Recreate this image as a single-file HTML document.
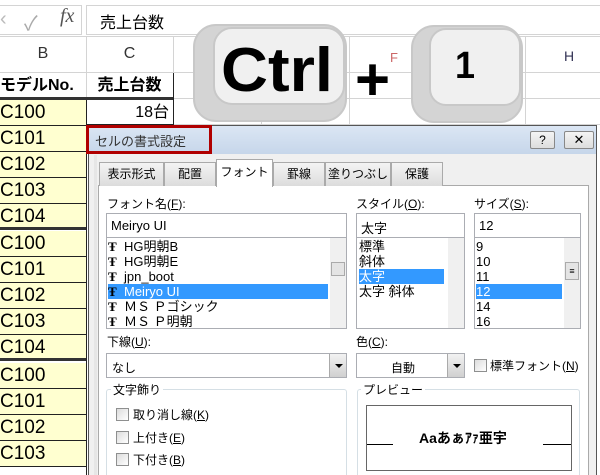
<!DOCTYPE html>
<html><head><meta charset="utf-8"><style>
*{box-sizing:border-box;margin:0;padding:0}
html,body{width:600px;height:475px;overflow:hidden}
body{background:#fff;position:relative;font-family:"Liberation Sans","Noto Sans CJK JP",sans-serif;color:#000}
.a{position:absolute}
.hl{position:absolute;height:1px;background:#d4d4d4}
.vl{position:absolute;width:1px;background:#d4d4d4}
.cell{position:absolute;left:0;width:86px;height:26px;background:#ffffd0;border-bottom:1px solid #222;font-size:19px;line-height:26px;padding-left:0}
.t{font-size:12px;position:absolute;white-space:nowrap}
.box{position:absolute;background:#fff;border:1px solid #abadb3;overflow:hidden}
.li{position:absolute;font-size:13px;height:15px;line-height:15px;white-space:nowrap}
.sel{background:#3399ff;color:#fff}
.sb{position:absolute;top:0;bottom:0;right:0;width:16px;background:#f0f0f0}
.tab{position:absolute;top:162px;height:24px;border:1px solid #aaa;border-bottom:none;background:linear-gradient(#f4f4f4,#dcdcdc);font-size:12px;text-align:center;line-height:22px}
.cb{position:absolute;width:13px;height:13px;border:1px solid #8e8f8f;background:linear-gradient(135deg,#dcdcdc,#fff)}
.dd{position:absolute;right:0;top:0;bottom:0;width:17px;background:linear-gradient(#f2f2f2,#d0d0d0);border-left:1px solid #aaa}
.dd:after{content:"";position:absolute;left:5px;top:10px;border:4px solid transparent;border-top:4px solid #000}
.tt{font-family:"Liberation Serif",serif;font-weight:bold;font-size:13px;display:inline-block;width:16px}
</style></head><body>
<div class="a" style="left:0;top:0;width:600px;height:37px;background:#fff;border-bottom:1px solid #d4d4d4"></div>
<div class="a" style="left:0;top:5px;width:82px;height:30px;border:1px solid #d4d4d4;border-left:none"></div>
<div class="a" style="left:0;top:8px;font-size:20px;color:#bbb">‹</div>
<div class="a" style="left:24px;top:7px;font-size:20px;color:#aaa">✓</div>
<div class="a" style="left:60px;top:5px;font-size:20px;color:#555;font-family:'Liberation Serif',serif;font-style:italic">fx</div>
<div class="a" style="left:86px;top:5px;width:520px;height:30px;border:1px solid #d4d4d4"></div>
<div class="a" style="left:100px;top:9px;font-size:16px">売上台数</div>
<div class="a" style="left:0;top:45px;width:86px;text-align:center;font-size:16px;color:#333">B</div>
<div class="a" style="left:86px;top:45px;width:87px;text-align:center;font-size:16px;color:#333">C</div>
<div class="a" style="left:390px;top:50px;font-size:13px;color:#c66">F</div>
<div class="a" style="left:564px;top:48px;font-size:14px;color:#335">H</div>
<div class="vl" style="left:86px;top:37px;height:440px"></div>
<div class="vl" style="left:173px;top:37px;height:90px"></div>
<div class="vl" style="left:261px;top:37px;height:90px"></div>
<div class="vl" style="left:349px;top:37px;height:90px"></div>
<div class="vl" style="left:525px;top:37px;height:90px"></div>
<div class="hl" style="left:0;top:72px;width:600px"></div>
<div class="hl" style="left:173px;top:98px;width:427px"></div>
<div class="hl" style="left:173px;top:124px;width:427px"></div>
<div class="a" style="left:0;top:73px;width:86px;height:26px;font-size:16px;font-weight:bold;line-height:26px">モデルNo.</div>
<div class="a" style="left:86px;top:73px;width:87px;height:26px;font-size:16px;font-weight:bold;line-height:26px;text-align:center">売上台数</div>
<div class="a" style="left:0;top:97px;width:173px;height:3px;background:#333"></div>
<div class="a" style="left:173px;top:73px;width:1px;height:52px;background:#222"></div>
<div class="a" style="left:86px;top:100px;width:87px;height:25px;font-size:16px;line-height:25px;text-align:right;padding-right:4px;border-bottom:1px solid #222">18台</div>
<div class="cell" style="top:100px">C100</div>
<div class="cell" style="top:126px">C101</div>
<div class="cell" style="top:152px">C102</div>
<div class="cell" style="top:178px">C103</div>
<div class="cell" style="top:204px;height:26px;border-bottom:3px solid #333">C104</div>
<div class="cell" style="top:231px">C100</div>
<div class="cell" style="top:257px">C101</div>
<div class="cell" style="top:283px">C102</div>
<div class="cell" style="top:309px">C103</div>
<div class="cell" style="top:335px;border-bottom:3px solid #333">C104</div>
<div class="cell" style="top:363px">C100</div>
<div class="cell" style="top:389px">C101</div>
<div class="cell" style="top:415px">C102</div>
<div class="cell" style="top:441px">C103</div>
<div class="a" style="left:86px;top:100px;width:1px;height:380px;background:#222"></div>
<svg class="a" style="left:190px;top:20px" width="350" height="106">
<rect x="4" y="5" width="152" height="96" rx="22" fill="#d4d4d4" stroke="#c8c8c8" stroke-width="2"/>
<rect x="24" y="8" width="130" height="76" rx="18" fill="#f0f0f0" stroke="#c8c8c8" stroke-width="2"/>
<rect x="222" y="6" width="110" height="96" rx="22" fill="#d4d4d4" stroke="#c8c8c8" stroke-width="2"/>
<rect x="240" y="9" width="90" height="76" rx="16" fill="#f0f0f0" stroke="#c8c8c8" stroke-width="2"/>
<text x="31" y="71" font-family="Liberation Sans" font-weight="bold" font-size="62" textLength="112" lengthAdjust="spacingAndGlyphs">Ctrl</text>
<text x="165" y="80" font-family="Liberation Sans" font-weight="bold" font-size="60">+</text>
<text x="265" y="58" font-family="Liberation Sans" font-size="38" font-weight="bold" textLength="20" lengthAdjust="spacingAndGlyphs">1</text>
</svg>
<div class="a" style="left:88px;top:125px;width:509px;height:360px;background:#f0f0f0;border:1px solid #555"></div>
<div class="a" style="left:89px;top:126px;width:507px;height:28px;background:linear-gradient(#dbe6f4,#c6d6ea)"></div>
<div class="a" style="left:86px;top:125px;width:126px;height:29px;border:3px solid #b00000"></div>
<div class="t" style="left:95px;top:131px;font-size:13px;color:#333">セルの書式設定</div>
<div class="a" style="left:530px;top:131px;width:25px;height:18px;border:1px solid #888;border-radius:2px;background:linear-gradient(#f4f4f4,#ddd);font-size:12px;text-align:center;line-height:16px">?</div>
<div class="a" style="left:564px;top:131px;width:30px;height:18px;border:1px solid #888;border-radius:2px;background:linear-gradient(#f4f4f4,#ddd);font-size:13px;text-align:center;line-height:16px">✕</div>
<div class="a" style="left:94px;top:155px;width:3px;height:320px;background:#e6e6e6"></div>
<div class="a" style="left:98px;top:185px;width:491px;height:295px;background:#fff;border:1px solid #aaa"></div>
<div class="tab" style="left:99px;width:65px">表示形式</div>
<div class="tab" style="left:164px;width:52px">配置</div>
<div class="tab" style="left:216px;top:159px;height:28px;width:57px;background:#fff;line-height:24px">フォント</div>
<div class="tab" style="left:273px;width:52px">罫線</div>
<div class="tab" style="left:325px;width:66px">塗りつぶし</div>
<div class="tab" style="left:391px;width:52px">保護</div>
<div class="t" style="left:107px;top:195px">フォント名(<u>F</u>):</div>
<div class="t" style="left:356px;top:195px">スタイル(<u>O</u>):</div>
<div class="t" style="left:474px;top:195px">サイズ(<u>S</u>):</div>
<div class="box" style="left:106px;top:213px;width:241px;height:25px"><div class="t" style="left:4px;top:4px;font-size:13px">Meiryo UI</div></div>
<div class="box" style="left:356px;top:213px;width:109px;height:25px"><div class="t" style="left:4px;top:4px;font-size:13px">太字</div></div>
<div class="box" style="left:474px;top:213px;width:107px;height:25px"><div class="t" style="left:4px;top:4px;font-size:13px">12</div></div>
<div class="box" style="left:106px;top:237px;width:241px;height:92px">
<div class="sb"><div class="a" style="left:1px;top:24px;width:14px;height:14px;border:1px solid #aaa;background:#e4e4e4"></div></div>
<div class="li" style="left:1px;top:1px;width:220px"><span class="tt">Ŧ</span>HG明朝B</div>
<div class="li" style="left:1px;top:16px;width:220px"><span class="tt">Ŧ</span>HG明朝E</div>
<div class="li" style="left:1px;top:31px;width:220px"><span class="tt">Ŧ</span>jpn_boot</div>
<div class="li sel" style="left:1px;top:46px;width:220px"><span class="tt" style="color:#000">Ŧ</span>Meiryo UI</div>
<div class="li" style="left:1px;top:61px;width:220px"><span class="tt">Ŧ</span>ＭＳ Ｐゴシック</div>
<div class="li" style="left:1px;top:76px;width:220px"><span class="tt">Ŧ</span>ＭＳ Ｐ明朝</div>
</div>
<div class="box" style="left:356px;top:237px;width:109px;height:92px">
<div class="sb"></div>
<div class="li" style="left:2px;top:1px;width:85px">標準</div>
<div class="li" style="left:2px;top:16px;width:85px">斜体</div>
<div class="li sel" style="left:2px;top:31px;width:85px">太字</div>
<div class="li" style="left:2px;top:46px;width:85px">太字 斜体</div>
</div>
<div class="box" style="left:474px;top:237px;width:107px;height:92px">
<div class="sb"><div class="a" style="left:1px;top:24px;width:14px;height:18px;border:1px solid #aaa;background:#e4e4e4;font-size:9px;text-align:center;line-height:16px">≡</div></div>
<div class="li" style="left:1px;top:1px;width:86px">9</div>
<div class="li" style="left:1px;top:16px;width:86px">10</div>
<div class="li" style="left:1px;top:31px;width:86px">11</div>
<div class="li sel" style="left:1px;top:46px;width:86px">12</div>
<div class="li" style="left:1px;top:61px;width:86px">14</div>
<div class="li" style="left:1px;top:76px;width:86px">16</div>
</div>
<div class="t" style="left:107px;top:333px">下線(<u>U</u>):</div>
<div class="t" style="left:356px;top:333px">色(<u>C</u>):</div>
<div class="box" style="left:106px;top:353px;width:241px;height:25px"><div class="t" style="left:5px;top:5px">なし</div><div class="dd"></div></div>
<div class="box" style="left:356px;top:353px;width:109px;height:25px"><div class="t" style="left:34px;top:5px">自動</div><div class="dd"></div></div>
<div class="cb" style="left:474px;top:359px"></div>
<div class="t" style="left:490px;top:357px">標準フォント(<u>N</u>)</div>
<div class="a" style="left:106px;top:389px;width:241px;height:100px;border:1px solid #d5dfe5;border-radius:3px"></div>
<div class="t" style="left:111px;top:381px;background:#fff;padding:0 2px">文字飾り</div>
<div class="a" style="left:357px;top:389px;width:223px;height:100px;border:1px solid #d5dfe5;border-radius:3px"></div>
<div class="t" style="left:361px;top:381px;background:#fff;padding:0 2px">プレビュー</div>
<div class="cb" style="left:116px;top:408px"></div><div class="t" style="left:133px;top:406px">取り消し線(<u>K</u>)</div>
<div class="cb" style="left:116px;top:431px"></div><div class="t" style="left:133px;top:429px">上付き(<u>E</u>)</div>
<div class="cb" style="left:116px;top:453px"></div><div class="t" style="left:133px;top:451px">下付き(<u>B</u>)</div>
<div class="a" style="left:366px;top:405px;width:206px;height:66px;border:1px solid #666"></div>
<div class="a" style="left:367px;top:444px;width:26px;height:1px;background:#000"></div>
<div class="a" style="left:543px;top:444px;width:28px;height:1px;background:#000"></div>
<div class="t" style="left:419px;top:428px;font-size:14px;font-weight:bold">Aaあぁｱｧ亜宇</div>
</body></html>
